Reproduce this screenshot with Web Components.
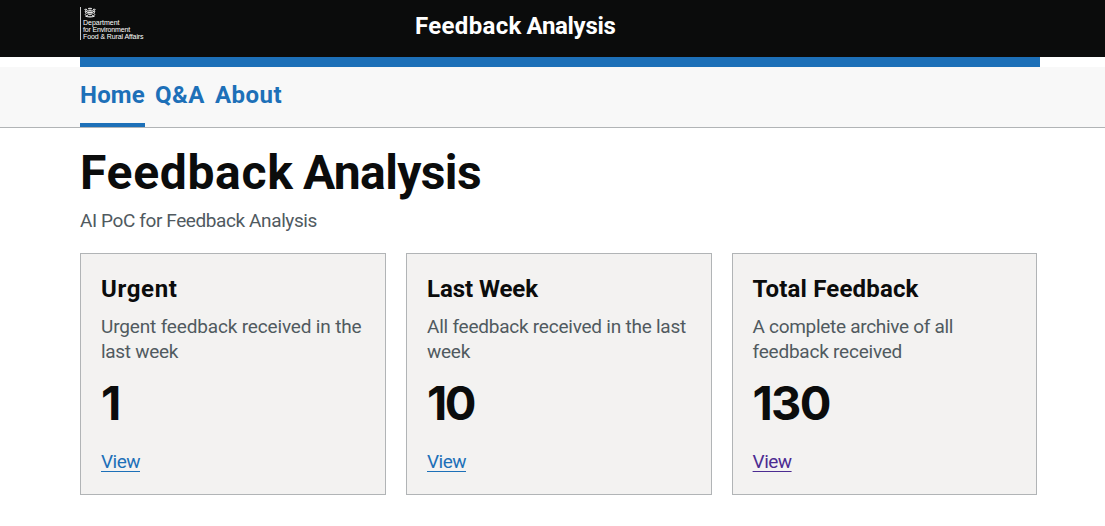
<!DOCTYPE html>
<html lang="en">
<head>
<meta charset="utf-8">
<title>Feedback Analysis</title>
<style>
body { margin: 0; background: #fff; color: #0b0c0c; font-family: Roboto, "Liberation Sans", sans-serif; }
</style>
</head>
<body>
<feedback-page></feedback-page>
<script>
const define = (name, html, init) => {
  const template = document.createElement('template');
  template.innerHTML = html;
  customElements.define(name, class extends HTMLElement {
    constructor() {
      super();
      this.attachShadow({ mode: 'open' }).append(template.content.cloneNode(true));
    }
    connectedCallback() { if (init) init(this, this.shadowRoot); }
  });
};

// A single line whose tracking is adjusted so that it sets to the given measure.
define('text-line', `
<style>
:host { display: block; width: max-content; white-space: nowrap; }
:host([inline]) { display: inline-block; }
</style><slot></slot>`,
(host) => {
  const measure = parseFloat(host.getAttribute('measure'));
  if (!measure) return;
  const natural = host.getBoundingClientRect().width;
  host.style.letterSpacing = ((measure - natural) / host.textContent.length).toFixed(4) + 'px';
});

define('department-logo', `
<style>
:host { display: block; box-sizing: border-box; height: 33px; border-left: 1px solid #c8c9c9; padding-left: 2px;
  color: #fff; font: 7px/7.2px "Liberation Sans", Arial, sans-serif; }
svg { display: block; margin: 0 0 .5px 1px; }
</style>
<svg width="12" height="11" viewBox="0 0 24 22" fill="none" stroke="#f0f0f0" stroke-width="1.9">
  <path d="M8.500 4.500 8 1.500l2.500 1.600L12 .6l1.500 2.500L16 1.500l-.5 3z" fill="#fff" stroke="none"/>
  <circle cx="12" cy="11" r="4.600"/><path d="M12 7v8M8 11h8"/>
  <path d="M7 8 4.500 4 1.500 5l2 2.500L2 10l3 2-2.500 3L5 18l3-2M4 8l3 3M17 8l2.500-4 3 1-2 2.500L22 10l-3 2 2.500 3L19 18l-3-2M20 8l-3 3"/>
  <path d="M3 18.500q9 2.500 18 0" stroke-width="2.500"/>
</svg>
<text-line measure="36.500">Department</text-line>
<text-line measure="47">for Environment</text-line>
<text-line measure="60.500">Food &amp; Rural Affairs</text-line>`);

define('site-header', `
<style>
:host { display: block; }
.top { background: #0b0c0c; height: 57px; }
.inner { width: 960px; margin-left: 80px; display: grid; grid-template-columns: 335px 1fr; align-items: start; }
department-logo { margin-top: 7px; }
.name { margin-top: 11px; font-size: 24px; line-height: 30px; font-weight: 700; color: #fff; word-spacing: -1.2px; }
.bar { width: 960px; height: 10px; margin-left: 80px; background: #1d70b8; }
</style>
<div class="top"><div class="inner"><department-logo></department-logo>
<div class="name"><text-line inline measure="106.7">Feedback</text-line> <text-line inline measure="89">Analysis</text-line></div></div></div>
<div class="bar"></div>`);

define('nav-item', `
<style>
:host { display: block; box-sizing: border-box; height: 60px; padding-top: 13px; border-bottom: 4px solid transparent; }
:host([current]) { border-color: #1d70b8; }
a { color: #1d70b8; text-decoration: none; }
</style><a><slot></slot></a>`);

define('site-nav', `
<style>
:host { display: flex; gap: 10px; padding-left: 80px; background: #f8f8f8; border-bottom: 1px solid #b1b4b6;
  font-size: 24px; line-height: 30px; font-weight: 700; }
</style>
<nav-item current><text-line measure="65">Home</text-line></nav-item>
<nav-item><text-line measure="50">Q&amp;A</text-line></nav-item>
<nav-item><text-line measure="67">About</text-line></nav-item>`);

define('summary-card', `
<style>
:host { display: block; box-sizing: border-box; border: 1px solid #b1b4b6; background: #f3f2f1; padding: 20px; height: 242px; --link: #1d70b8; }
:host([visited]) { --link: #4c2c92; padding-left: 19.6px; }
h2 { margin: 0 0 10px; font-size: 24px; line-height: 30px; font-weight: 700; }
.desc { color: #505a5f; font-size: 19px; line-height: 25px; height: 50px; }
.count { margin: 15px 0 20px; height: 50px; font: 700 47px/48px Inter, Roboto, sans-serif; }
.link { display: block; width: max-content; font-size: 19px; line-height: 25px; color: var(--link);
  text-decoration: underline; text-decoration-thickness: 1px; text-underline-offset: 3px; text-decoration-skip-ink: none; }
</style>
<h2><slot name="title"></slot></h2>
<div class="desc"><slot name="desc"></slot></div>
<div class="count"><slot name="count"></slot></div>
<a class="link"><text-line measure="39">View</text-line></a>`);

define('feedback-page', `
<style>
:host { display: block; }
main { width: 957px; margin-left: 80px; padding-top: 20px; }
h1 { margin: 0 0 10px; font-size: 48px; line-height: 50px; font-weight: 700; word-spacing: -2.5px; }
.lead { font-size: 19px; line-height: 25px; color: #505a5f; }
.cards { margin-top: 20px; display: grid; grid-template-columns: 306px 306px 305px; gap: 20px; }
</style>
<site-header></site-header>
<site-nav></site-nav>
<main>
<h1><text-line inline measure="213.5">Feedback</text-line> <text-line inline measure="178">Analysis</text-line></h1>
<text-line class="lead" measure="237">AI PoC for Feedback Analysis</text-line>
<div class="cards">
  <summary-card>
    <text-line slot="title" measure="76.5">Urgent</text-line>
    <text-line slot="desc" measure="260.5">Urgent feedback received in the</text-line>
    <text-line slot="desc" measure="77">last week</text-line>
    <text-line slot="count" measure="18">1</text-line>
  </summary-card>
  <summary-card>
    <text-line slot="title" measure="111">Last Week</text-line>
    <text-line slot="desc" measure="259">All feedback received in the last</text-line>
    <text-line slot="desc" measure="43">week</text-line>
    <text-line slot="count" measure="47">10</text-line>
  </summary-card>
  <summary-card visited>
    <text-line slot="title" measure="166">Total Feedback</text-line>
    <text-line slot="desc" measure="200.5">A complete archive of all</text-line>
    <text-line slot="desc" measure="149.5">feedback received</text-line>
    <text-line slot="count" measure="77">130</text-line>
  </summary-card>
</div>
</main>`);
</script>
</body>
</html>
